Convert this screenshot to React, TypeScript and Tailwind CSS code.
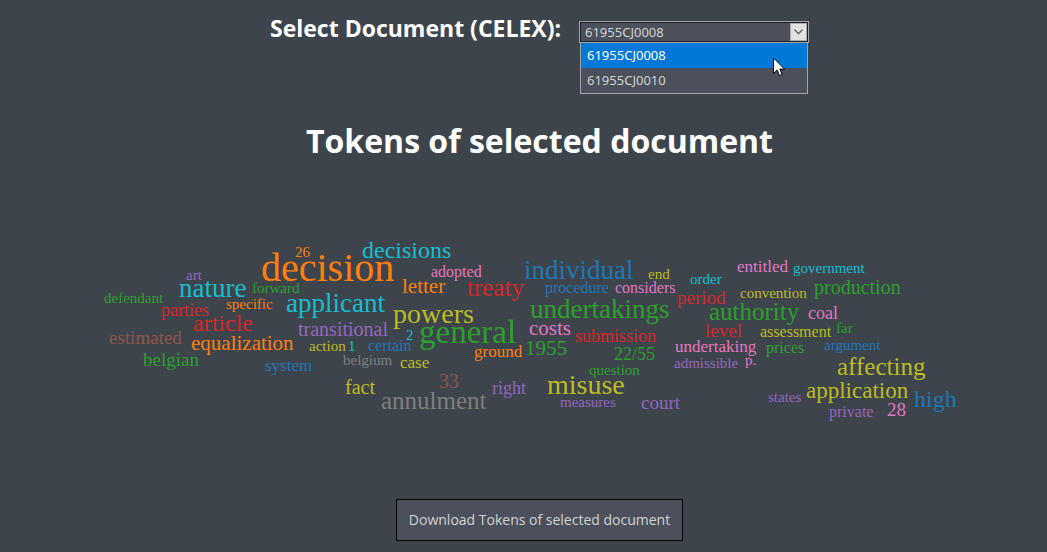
import { useState } from "react";

const BLUE = "#1f77b4";
const ORANGE = "#ff7f0e";
const GREEN = "#2ca02c";
const RED = "#d62728";
const PURPLE = "#9467bd";
const BROWN = "#8c564b";
const PINK = "#e377c2";
const GRAY = "#7f7f7f";
const OLIVE = "#bcbd22";
const CYAN = "#17becf";

type Token = [text: string, x: number, y: number, size: number, fill: string];

const tokens: Token[] = [
  ["decision", 161, 80, 40, ORANGE],
  ["general", 319, 142, 33, GREEN],
  ["powers", 293, 122, 28, OLIVE],
  ["misuse", 447, 193, 28, OLIVE],
  ["undertakings", 430, 117, 27, GREEN],
  ["individual", 424, 78, 27, BLUE],
  ["applicant", 186, 111, 27, CYAN],
  ["nature", 79, 96, 27, CYAN],
  ["authority", 609, 119, 25, GREEN],
  ["affecting", 737, 174, 25, OLIVE],
  ["annulment", 281, 208, 25, GRAY],
  ["treaty", 367, 95, 25, RED],
  ["article", 93, 130, 24, RED],
  ["decisions", 262, 57, 24, CYAN],
  ["high", 814, 206, 24, BLUE],
  ["application", 706, 197, 23, OLIVE],
  ["equalization", 91, 149, 21, ORANGE],
  ["letter", 302, 92, 21, ORANGE],
  ["costs", 429, 134, 21, PINK],
  ["1955", 425, 154, 21, GREEN],
  ["transitional", 198, 135, 20, PURPLE],
  ["production", 714, 93, 20, GREEN],
  ["fact", 245, 193, 20, OLIVE],
  ["33", 339, 187, 20, BROWN],
  ["estimated", 9, 143, 19, BROWN],
  ["belgian", 43, 165, 19, GREEN],
  ["period", 577, 103, 19, RED],
  ["level", 605, 136, 19, RED],
  ["court", 541, 208, 19, PURPLE],
  ["28", 787, 215, 19, PINK],
  ["parties", 61, 115, 18, RED],
  ["right", 392, 193, 18, PURPLE],
  ["submission", 475, 141, 18, RED],
  ["22/55", 514, 159, 18, GREEN],
  ["coal", 708, 118, 18, PINK],
  ["system", 165, 170, 17, BLUE],
  ["ground", 374, 156, 17, ORANGE],
  ["case", 300, 167, 17, OLIVE],
  ["entitled", 637, 71, 17, PINK],
  ["undertaking", 575, 151, 17, PINK],
  ["adopted", 331, 76, 16, PINK],
  ["certain", 268, 150, 16, BLUE],
  ["procedure", 445, 92, 16, BLUE],
  ["considers", 515, 92, 16, PINK],
  ["assessment", 660, 136, 16, OLIVE],
  ["prices", 666, 152, 16, GREEN],
  ["private", 729, 216, 16, PURPLE],
  ["26", 195, 56, 15, ORANGE],
  ["art", 86, 79, 15, PURPLE],
  ["forward", 152, 92, 15, GREEN],
  ["defendant", 4, 102, 15, GREEN],
  ["specific", 126, 108, 15, ORANGE],
  ["action", 209, 150, 15, OLIVE],
  ["1", 248, 150, 15, CYAN],
  ["2", 306, 139, 15, CYAN],
  ["belgium", 243, 164, 15, GRAY],
  ["end", 548, 78, 15, OLIVE],
  ["order", 590, 83, 15, CYAN],
  ["government", 693, 72, 15, CYAN],
  ["convention", 640, 97, 15, OLIVE],
  ["far", 736, 132, 15, GREEN],
  ["argument", 724, 149, 15, BLUE],
  ["question", 489, 174, 15, GREEN],
  ["admissible", 574, 167, 15, PURPLE],
  ["p.", 645, 164, 15, PINK],
  ["measures", 460, 206, 15, PURPLE],
  ["states", 668, 201, 15, PURPLE],
];

const documents = ["61955CJ0008", "61955CJ0010"];

function DocumentSelect() {
  const [selected, setSelected] = useState(documents[0]);
  const [active, setActive] = useState(documents[0]);
  const [open, setOpen] = useState(true);

  return (
    <div className="relative w-[230px] font-['Noto_Sans',sans-serif] text-[13px] text-[#d3d3d3]">
      <select
        id="celex"
        value={selected}
        onChange={(e) => setSelected(e.target.value)}
        onMouseDown={(e) => {
          e.preventDefault();
          setOpen(!open);
        }}
        className="block h-[22px] w-full appearance-none border border-[#a5a5a5] bg-[#4b505c] px-[5px] leading-5 outline -outline-offset-2 outline-[#1d1f27]"
      >
        {documents.map((d) => (
          <option key={d}>{d}</option>
        ))}
      </select>
      <span className="pointer-events-none absolute top-[2px] right-[2px] flex h-[18px] w-[17px] items-center justify-center border border-[#adadad] bg-[#e1e1e1]">
        <svg width="9" height="6" viewBox="0 0 9 6" fill="none" stroke="#505050" strokeWidth="1.2" aria-hidden="true">
          <path d="M0.5 0.7 4.5 4.7 8.5 0.7" />
        </svg>
      </span>
      {open && (
        <ul role="listbox" aria-label="Documents" className="absolute top-[22px] right-px left-px border border-t-0 border-[#a5a5a5] bg-[#4b505c]">
          {documents.map((d) => (
            <li
              key={d}
              role="option"
              aria-selected={d === active}
              onMouseEnter={() => setActive(d)}
              onClick={() => {
                setSelected(d);
                setOpen(false);
              }}
              className={d === active ? "bg-[#0078d7] px-1.5 leading-[25px] text-white" : "px-1.5 leading-[25px]"}
            >
              {d}
            </li>
          ))}
        </ul>
      )}
      {open && (
        <svg className="pointer-events-none absolute top-9 left-[194px]" width="13" height="20" viewBox="0 0 13 20" aria-hidden="true">
          <path d="M0.5 1V16.5L4.1 13.1L6.5 18.6L9.2 17.4L6.8 12.1H11.6Z" fill="#fff" stroke="#000" />
        </svg>
      )}
    </div>
  );
}

export default function App() {
  return (
    <main className="flex min-h-screen flex-col items-center bg-[#3e444c] pt-3 pb-[11px] pl-8 font-['Open_Sans',sans-serif] text-white">
      <div className="flex items-start justify-center gap-[18px]">
        <label htmlFor="celex" className="text-[23px] leading-8 font-bold">
          Select Document (CELEX):
        </label>
        <div className="pt-[9px]">
          <DocumentSelect />
        </div>
      </div>

      <h1 className="mt-[77px] text-[32px] leading-10 font-bold">Tokens of selected document</h1>

      <svg
        className="mt-10 max-w-full font-['Liberation_Serif',serif]"
        width="881"
        height="240"
        viewBox="-1 0 881 240"
        role="img"
        aria-label="Word cloud of document tokens"
      >
        {tokens.map(([text, x, y, size, fill]) => (
          <text key={text} x={x} y={y} fontSize={size} fill={fill}>
            {text}
          </text>
        ))}
      </svg>

      <button type="button" className="mt-[58px] border border-black bg-[#4b505c] px-3 py-2 text-[14px] leading-6 text-[#d3d3d3]">
        Download Tokens of selected document
      </button>
    </main>
  );
}
